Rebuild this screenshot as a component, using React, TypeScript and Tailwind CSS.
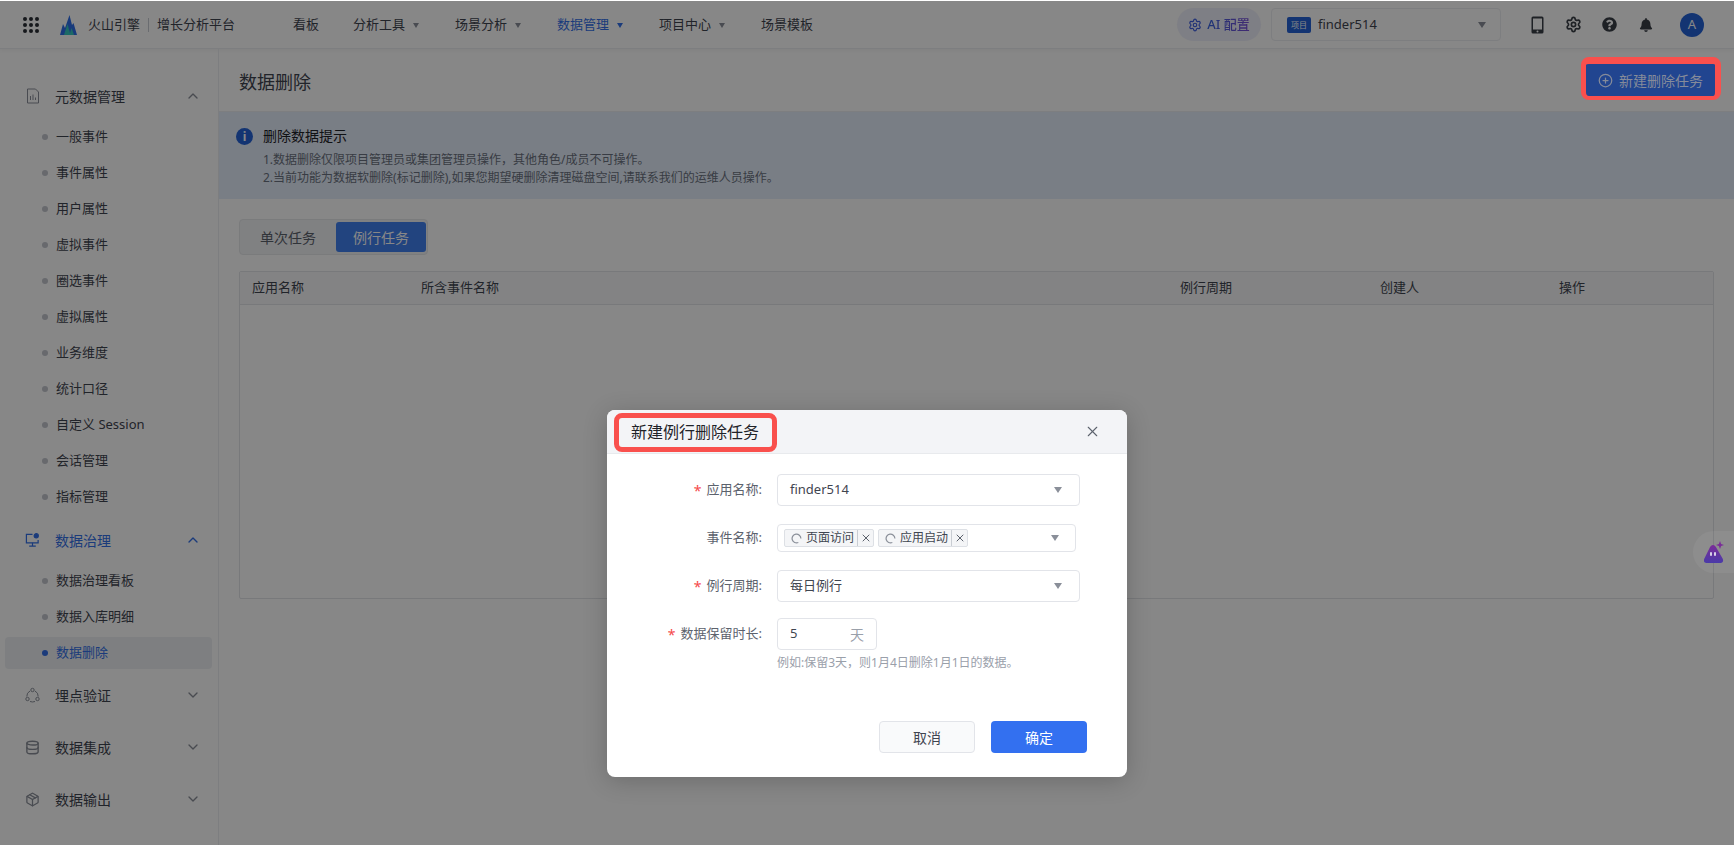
import { ChevronDown, ChevronUp, CirclePlus, Database, Package, Settings, X } from "lucide-react";
import { FaBell, FaQuestionCircle } from "react-icons/fa";

const font = "font-['Noto_Sans','Noto_Sans_CJK_SC',sans-serif]";

const Caret = ({ color = "border-t-[#8a8f99]" }: { color?: string }) => (
  <span className={`inline-block w-0 h-0 border-x-[3.5px] border-x-transparent border-t-[5px] ${color}`} />
);

const BigCaret = () => (
  <span className="inline-block w-0 h-0 border-x-[4px] border-x-transparent border-t-[6px] border-t-[#8a8f99]" />
);

const Dot = ({ active }: { active?: boolean }) => (
  <span className={`w-[6px] h-[6px] rounded-full ${active ? "bg-[#3370e8]" : "bg-[#c4c7ce]"}`} />
);

const metaItems = ["一般事件", "事件属性", "用户属性", "虚拟事件", "圈选事件", "虚拟属性", "业务维度", "统计口径", "自定义 Session", "会话管理", "指标管理"];

const SubItem = ({ label, active }: { label: string; active?: boolean }) => (
  <div className={`flex items-center h-[32px] ml-[5px] mr-[6px] pl-[37px] gap-[8px] rounded-[4px] text-[13px] ${active ? "bg-[#eef0f3] text-[#3370e8]" : "text-[#3f4550]"}`}>
    <Dot active={active} />
    <span>{label}</span>
  </div>
);

const GroupHead = ({ icon, label, open, active }: { icon: React.ReactNode; label: string; open?: boolean; active?: boolean }) => (
  <div className={`flex items-center h-[52px] pl-[25px] pr-[17px] text-[14px] ${active ? "text-[#3370e8]" : "text-[#3f4550]"}`}>
    <span className="w-[15px] h-[16px] mr-[15px] flex items-center justify-center">{icon}</span>
    <span className="flex-1">{label}</span>
    {open ? <ChevronUp size={16} color={active ? "#3370e8" : "#8a8f99"} /> : <ChevronDown size={16} color="#8a8f99" />}
  </div>
);

const NavItem = ({ label, caret, active }: { label: string; caret?: boolean; active?: boolean }) => (
  <div className={`flex items-center gap-[8px] text-[13px] ${active ? "text-[#3370e8]" : "text-[#3f4550]"}`}>
    <span>{label}</span>
    {caret && <Caret color={active ? "border-t-[#3370e8]" : "border-t-[#8a8f99]"} />}
  </div>
);

const Logo = () => (
  <svg width="17" height="20" viewBox="0 0 17 20">
    <path d="M0 20 L3 9 L5 13 L9.5 0 L12 10 L13.5 8 L17 20 Z" fill="#2f6fe8" />
    <path d="M4 20 L7.5 9 L10.5 20 Z" fill="#36c9c0" />
    <path d="M9.5 20 L11.5 13 L14 20 Z" fill="#36c9c0" />
  </svg>
);

const TagBox = ({ label }: { label: string }) => (
  <span className="flex items-center w-[90px] h-[18px] border border-[#dde0e5] rounded-[2px] bg-[#f4f5f7] text-[12px] text-[#3f4550]">
    <span className="flex items-center gap-[4px] pl-[6px] w-[73px] shrink-0 border-r border-[#c9cdd3] h-full">
      <svg width="11" height="11" viewBox="0 0 12 12" fill="none" stroke="#8a8f99" strokeWidth="1.3">
        <path d="M10.8 6 A4.8 4.8 0 1 0 8 10.4" />
      </svg>
      {label}
    </span>
    <span className="flex-1 flex items-center justify-center">
      <X size={12} color="#5c626d" />
    </span>
  </span>
);

const Field = ({ label, required, short, children }: { label: string; required?: boolean; short?: boolean; children: React.ReactNode }) => (
  <div className="flex items-start">
    <div className={`w-[170px] shrink-0 flex items-center justify-end gap-[5px] text-[13px] text-[#5c626d] pr-[15px] ${short ? "h-[28px]" : "h-[32px]"}`}>
      {required && <span className="text-[#f5484a] text-[14px]">*</span>}
      <span>{label}:</span>
    </div>
    {children}
  </div>
);

const SelectBox = ({ value }: { value: string }) => (
  <div className="w-[303px] h-[32px] border border-[#e2e4e9] rounded-[4px] flex items-center justify-between pl-[12px] pr-[17px] text-[13px] text-[#3f4550]">
    <span>{value}</span>
    <BigCaret />
  </div>
);

export default function App() {
  return (
    <div className={`relative w-[1734px] h-[845px] overflow-hidden bg-white ${font}`}>
      <header className="h-[49px] pt-px flex items-center border-b border-[#eceef1] shadow-[0_1px_4px_rgba(0,0,0,0.06)]">
        <div className="w-[16px] h-[16px] ml-[23px] grid grid-cols-3 gap-[2px]">
          {Array.from({ length: 9 }).map((_, i) => (
            <span key={i} className="w-[4px] h-[4px] rounded-full bg-[#2b2f36]" />
          ))}
        </div>
        <div className="ml-[21px] flex"><Logo /></div>
        <div className="ml-[11px] mt-[1px] flex items-center text-[13px] text-[#3f4550]">
          <span>火山引擎</span>
          <span className="mx-[8px] w-px h-[14px] bg-[#c9cdd3]" />
          <span>增长分析平台</span>
        </div>
        <nav className="ml-[58px] mt-[1px] flex items-center gap-[36px]">
          <div className="-mr-[2px]"><NavItem label="看板" /></div>
          <NavItem label="分析工具" caret />
          <NavItem label="场景分析" caret />
          <NavItem label="数据管理" caret active />
          <NavItem label="项目中心" caret />
          <NavItem label="场景模板" />
        </nav>
        <div className="ml-auto flex items-center">
          <div className="w-[84px] h-[33px] rounded-full bg-[#eff0fb] flex items-center justify-center gap-[5px] text-[13px] font-medium">
            <Settings size={14} color="#3f5fe0" />
            <span className="bg-gradient-to-r from-[#2f62e0] to-[#7a4fd8] bg-clip-text text-transparent">AI 配置</span>
          </div>
          <div className="ml-[10px] w-[230px] h-[33px] border border-[#eceef1] rounded-[4px] flex items-center pl-[15px] pr-[14px] text-[13px] text-[#3f4550]">
            <span className="w-[24px] h-[16px] rounded-[2px] bg-[#2563d8] text-white text-[8px] flex items-center justify-center">项目</span>
            <span className="ml-[7px] flex-1">finder514</span>
            <BigCaret />
          </div>
          <svg className="ml-[30px]" width="13" height="18" viewBox="0 0 13 18">
            <rect x="0.5" y="0.5" width="12" height="17" rx="1.5" fill="#3a3f47" />
            <rect x="2" y="2.5" width="9" height="11" fill="#fff" />
            <circle cx="6.5" cy="15.5" r="1" fill="#fff" />
          </svg>
          <Settings className="ml-[21px]" size={17} color="#3a3f47" strokeWidth={2.4} />
          <FaQuestionCircle className="ml-[20px]" size={15} color="#3a3f47" />
          <FaBell className="ml-[22px]" size={14} color="#3a3f47" />
          <span className="ml-[27px] mr-[30px] w-[24px] h-[24px] rounded-full bg-[#2563d8] text-white text-[13px] flex items-center justify-center">A</span>
        </div>
      </header>

      <div className="flex h-[796px]">
        <aside className="w-[219px] shrink-0 border-r border-[#eceef1] pt-[21px]">
          <GroupHead
            label="元数据管理"
            open
            icon={
              <svg width="14" height="16" viewBox="0 0 14 16" fill="none" stroke="#8a8f99">
                <path d="M1.5 1 H9.5 L12.5 4 V15 H1.5 Z" />
                <path d="M4.5 12 V8 M7 12 V6.5 M9.5 12 V9.5" />
              </svg>
            }
          />
          <div className="-mt-[3px] -mb-[1px]">
            {metaItems.map((m) => (
              <div key={m} className="h-[36px] flex flex-col justify-center">
                <SubItem label={m} />
              </div>
            ))}
          </div>
          <GroupHead
            label="数据治理"
            open
            active
            icon={
              <svg width="16" height="16" viewBox="0 0 16 16" fill="none" stroke="#3370e8" strokeWidth="1.3">
                <path d="M8 2 H1.5 V11 H14 V8" />
                <path d="M8 11 V14 M4.5 14.5 H11.5" />
                <circle cx="12" cy="3.5" r="2.2" fill="#3370e8" />
              </svg>
            }
          />
          <div className="-mt-[3px] mb-[-2px]">
            <div className="h-[36px] flex flex-col justify-center"><SubItem label="数据治理看板" /></div>
            <div className="h-[36px] flex flex-col justify-center"><SubItem label="数据入库明细" /></div>
            <div className="h-[36px] flex flex-col justify-center"><SubItem label="数据删除" active /></div>
          </div>
          <GroupHead
            label="埋点验证"
            icon={
              <svg width="15" height="16" viewBox="0 0 15 16" fill="none" stroke="#8a8f99">
                <circle cx="7.5" cy="3" r="1.7" />
                <circle cx="2.5" cy="12" r="1.7" />
                <circle cx="12.5" cy="12" r="1.7" />
                <path d="M5 4 A6 6 0 0 0 1.8 9.5 M10 4 A6 6 0 0 1 13.2 9.5 M5 14.5 A7 7 0 0 0 10 14.5" />
              </svg>
            }
          />
          <GroupHead label="数据集成" icon={<Database size={15} color="#8a8f99" strokeWidth={2.2} />} />
          <GroupHead label="数据输出" icon={<Package size={15} color="#8a8f99" />} />
        </aside>

        <main className="flex-1 min-w-0">
          <div className="h-[63px] pt-[4px] flex items-center pl-[20px] text-[18px] text-[#3f4550] border-b border-[#eceef1]">数据删除</div>
          <div className="h-[87px] bg-[#e5eefb] pl-[17px] pt-[14px] flex gap-[10px]">
            <span className="mt-[2px] w-[17px] h-[17px] rounded-full bg-[#2563d8] text-white text-[12px] font-bold flex items-center justify-center">i</span>
            <div>
              <div className="text-[14px] text-[#1f2329] leading-[20px]">删除数据提示</div>
              <div className="text-[12px] text-[#6b7280] leading-[18px] mt-[5px]">1.数据删除仅限项目管理员或集团管理员操作，其他角色/成员不可操作。</div>
              <div className="text-[12px] text-[#6b7280] leading-[18px]">2.当前功能为数据软删除(标记删除),如果您期望硬删除清理磁盘空间,请联系我们的运维人员操作。</div>
            </div>
          </div>
          <div className="px-[20px] pt-[20px]">
            <div className="w-[189px] h-[36px] flex items-center gap-[2px] pl-[2px] py-[2px] bg-[#f2f3f5] border border-[#e6e8eb] rounded-[4px] text-[14px]">
              <span className="w-[92px] h-full flex items-center justify-center text-[#5c626d]">单次任务</span>
              <span className="w-[90px] h-full flex items-center justify-center rounded-[3px] bg-[#4080f0] text-white">例行任务</span>
            </div>
            <div className="mt-[16px] h-[328px] border border-[#e2e4e9] rounded-[2px]">
              <div className="h-[33px] bg-[#f7f8fa] border-b border-[#e2e4e9] grid grid-cols-[169px_759px_200px_179px_1fr] items-center pl-[12px] text-[13px] text-[#3f4550]">
                <span>应用名称</span>
                <span>所含事件名称</span>
                <span>例行周期</span>
                <span>创建人</span>
                <span>操作</span>
              </div>
            </div>
          </div>
        </main>
      </div>

      {/* mask */}
      <div className="absolute inset-x-0 top-px bottom-0 bg-black/[0.47]" />

      {/* floating helper */}
      <div className="absolute right-0 top-[531px] w-[41px] h-[42px] rounded-l-[21px] bg-white/5 flex items-center pl-[11px]">
        <svg width="20" height="22" viewBox="0 0 20 22">
          <defs>
            <linearGradient id="helperFill" x1="0" y1="0" x2="0" y2="1">
              <stop offset="0" stopColor="#7a2c98" />
              <stop offset="1" stopColor="#4a3aa8" />
            </linearGradient>
          </defs>
          <path d="M9 4 C10.5 4 11.3 5 12.2 6.6 L18.6 17.6 C19.8 20 18.8 22 16.6 22 H2.4 C0.2 22 -0.8 20 0.4 17.6 L5.8 6.6 C6.7 5 7.5 4 9 4 Z" fill="url(#helperFill)" />
          <rect x="6" y="11" width="2" height="4" rx="1" fill="#d8d0e8" />
          <rect x="10" y="11" width="2" height="4" rx="1" fill="#d8d0e8" />
          <path d="M16 0 L17.1 2.9 L20 4 L17.1 5.1 L16 8 L14.9 5.1 L12 4 L14.9 2.9 Z" fill="#7a2c98" />
        </svg>
      </div>

      {/* dialog */}
      <div className="absolute left-[607px] top-[410px] w-[520px] h-[367px] rounded-[8px] bg-white shadow-[0_4px_24px_rgba(0,0,0,0.2)] flex flex-col">
        <div className="h-[44px] shrink-0 bg-[#f3f4f7] border-b border-[#e8eaed] rounded-t-[8px] flex items-center justify-between pl-[24px] pr-[26px]">
          <span className="text-[16px] text-[#1f2329]">新建例行删除任务</span>
          <X size={17} color="#5c626d" strokeWidth={1.5} />
        </div>
        <div className="pt-[20px] flex flex-col gap-[18px]">
          <Field label="应用名称" required>
            <SelectBox value="finder514" />
          </Field>
          <Field label="事件名称" short>
            <div className="w-[299px] h-[28px] border border-[#e2e4e9] rounded-[4px] flex items-center pl-[6px] pr-[16px] gap-[4px]">
              <TagBox label="页面访问" />
              <TagBox label="应用启动" />
              <span className="ml-auto flex"><BigCaret /></span>
            </div>
          </Field>
          <Field label="例行周期" required>
            <SelectBox value="每日例行" />
          </Field>
          <div className="-mt-[2px]">
            <Field label="数据保留时长" required>
              <div>
                <div className="w-[100px] h-[32px] border border-[#e2e4e9] rounded-[4px] flex items-center justify-between pl-[12px] pr-[12px] text-[13px]">
                  <span className="text-[#3f4550]">5</span>
                  <span className="text-[#9aa0aa] text-[14px]">天</span>
                </div>
                <div className="mt-[4px] text-[12px] leading-[18px] text-[#9aa0aa]">例如:保留3天，则1月4日删除1月1日的数据。</div>
              </div>
            </Field>
          </div>
        </div>
        <div className="mt-auto mb-[24px] pr-[40px] flex justify-end gap-[16px] text-[14px]">
          <span className="w-[96px] h-[32px] border border-[#e2e4e9] rounded-[4px] bg-[#f9fafb] text-[#3f4550] flex items-center justify-center">取消</span>
          <span className="w-[96px] h-[32px] rounded-[4px] bg-[#3370f0] text-white flex items-center justify-center">确定</span>
        </div>
        {/* red highlight on title */}
        <div className="absolute left-[7px] top-[3px] w-[163px] h-[39px] border-[5px] border-[#f9504d] rounded-[8px]" />
      </div>

      {/* highlighted button */}
      <div className="absolute left-[1581px] top-[57px] w-[140px] h-[43px] border-t-[7px] border-b-[4px] border-l-[5px] border-r-[6px] border-[#f9504d] rounded-[8px] bg-[#214590] flex items-center justify-center gap-[6px] text-[14px] text-[#858b9a]">
        <CirclePlus size={15} />
        <span>新建删除任务</span>
      </div>
    </div>
  );
}
